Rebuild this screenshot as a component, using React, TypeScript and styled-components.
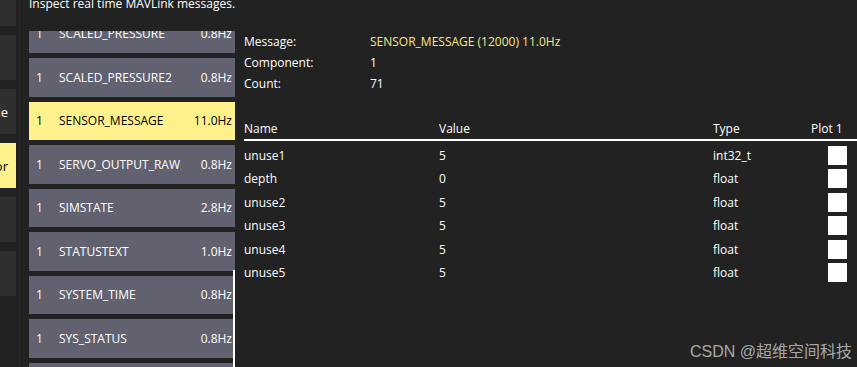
import React from "react";
import styled, { createGlobalStyle } from "styled-components";

const Global = createGlobalStyle`
  html, body { margin: 0; padding: 0; background: #222222; overflow: hidden; }
  body { font-family: "Open Sans", "Noto Sans", sans-serif; font-size: 12px; color: #ffffff; }
  #root { height: 100vh; }
`;

const Page = styled.div`
  position: relative;
  display: flex;
  height: 100vh;
  overflow: hidden;
  background: #222222;
`;

const SideStrip = styled.div`
  flex: none;
  width: 16px;
  display: flex;
  flex-direction: column;
  gap: 9px;
  margin-top: -19px;
  overflow: hidden;
`;

const SideButton = styled.div<{ $selected?: boolean }>`
  flex: none;
  height: 45px;
  display: flex;
  align-items: center;
  justify-content: flex-end;
  padding-right: 8px;
  overflow: hidden;
  white-space: nowrap;
  font-size: 13px;
  background: ${(p) => (p.$selected ? "#fff28c" : "#2f2f2f")};
  color: ${(p) => (p.$selected ? "#000000" : "#ffffff")};
`;

const Divider = styled.div`
  flex: none;
  width: 1px;
  margin-left: 3px;
  background: #2b2b2b;
`;

const Main = styled.div`
  flex: 1;
  min-width: 0;
  padding-left: 9px;
  display: flex;
  flex-direction: column;
`;

const Title = styled.div`
  margin-top: -5px;
  line-height: 18px;
  font-size: 12px;
  white-space: nowrap;
`;

const Content = styled.div`
  flex: 1;
  min-height: 0;
  margin-top: 18px;
  display: flex;
  gap: 9px;
`;

const ListViewport = styled.div`
  position: relative;
  flex: none;
  width: 206px;
  overflow: hidden;
`;

const ListInner = styled.div`
  margin-top: -16.5px;
  display: flex;
  flex-direction: column;
  gap: 5px;
`;

const MsgRow = styled.div<{ $selected?: boolean }>`
  flex: none;
  height: 38.5px;
  display: flex;
  align-items: center;
  padding: 0 3px 0 7px;
  background: ${(p) => (p.$selected ? "#fff28c" : "#62616f")};
  color: ${(p) => (p.$selected ? "#000000" : "#ffffff")};
  white-space: nowrap;
`;

const MsgComp = styled.span`
  width: 23px;
  flex: none;
`;

const MsgName = styled.span`
  flex: 1;
`;

const MsgHz = styled.span`
  flex: none;
  text-align: right;
`;

const ScrollIndicator = styled.div`
  position: absolute;
  right: 0;
  top: 239px;
  bottom: 0;
  width: 2px;
  background: #ffffff;
`;

const Detail = styled.div`
  flex: 1;
  min-width: 0;
  display: flex;
  flex-direction: column;
`;

const InfoGrid = styled.div`
  display: grid;
  grid-template-columns: 126px 1fr;
  grid-auto-rows: 21px;
  align-items: center;
  white-space: nowrap;
`;

const InfoValue = styled.span<{ $highlight?: boolean }>`
  color: ${(p) => (p.$highlight ? "#f2e88a" : "#ffffff")};
`;

const Table = styled.div`
  margin-top: 24px;
  display: flex;
  flex-direction: column;
`;

const cols = "195px 274px 98px 36px";

const HeaderRow = styled.div`
  display: grid;
  grid-template-columns: ${cols};
  height: 21px;
  align-items: center;
  padding-right: 10px;
  border-bottom: 2px solid #ffffff;
  white-space: nowrap;
`;

const Rows = styled.div`
  display: flex;
  flex-direction: column;
  gap: 4.4px;
  padding-top: 5px;
`;

const FieldRow = styled.div`
  display: grid;
  grid-template-columns: ${cols};
  height: 19px;
  align-items: center;
  padding-right: 10px;
  white-space: nowrap;
`;

const CheckBox = styled.div`
  justify-self: end;
  width: 19px;
  height: 19px;
  background: #ffffff;
`;

const Watermark = styled.div`
  position: absolute;
  right: 5px;
  bottom: 5px;
  font-family: "Liberation Sans", "Noto Sans CJK SC", sans-serif;
  font-size: 16px;
  color: rgba(255, 255, 255, 0.62);
  white-space: nowrap;
`;

const sideButtons = [
  { label: "" },
  { label: "" },
  { label: "MAVLink Console" },
  { label: "MAVLink Inspector", selected: true },
  { label: "" },
  { label: "" },
];

const messages = [
  { name: "SCALED_PRESSURE", hz: "0.8Hz" },
  { name: "SCALED_PRESSURE2", hz: "0.8Hz" },
  { name: "SENSOR_MESSAGE", hz: "11.0Hz", selected: true },
  { name: "SERVO_OUTPUT_RAW", hz: "0.8Hz" },
  { name: "SIMSTATE", hz: "2.8Hz" },
  { name: "STATUSTEXT", hz: "1.0Hz" },
  { name: "SYSTEM_TIME", hz: "0.8Hz" },
  { name: "SYS_STATUS", hz: "0.8Hz" },
  { name: "TIMESYNC", hz: "0.8Hz" },
];

const fields = [
  { name: "unuse1", value: "5", type: "int32_t" },
  { name: "depth", value: "0", type: "float" },
  { name: "unuse2", value: "5", type: "float" },
  { name: "unuse3", value: "5", type: "float" },
  { name: "unuse4", value: "5", type: "float" },
  { name: "unuse5", value: "5", type: "float" },
];

export default function App() {
  return (
    <>
      <Global />
      <Page>
        <SideStrip>
          {sideButtons.map((b, i) => (
            <SideButton key={i} $selected={b.selected}>
              {b.label}
            </SideButton>
          ))}
        </SideStrip>
        <Divider />
        <Main>
          <Title>Inspect real time MAVLink messages.</Title>
          <Content>
            <ListViewport>
              <ListInner>
                {messages.map((m) => (
                  <MsgRow key={m.name} $selected={m.selected}>
                    <MsgComp>1</MsgComp>
                    <MsgName>{m.name}</MsgName>
                    <MsgHz>{m.hz}</MsgHz>
                  </MsgRow>
                ))}
              </ListInner>
              <ScrollIndicator />
            </ListViewport>
            <Detail>
              <InfoGrid>
                <span>Message:</span>
                <InfoValue $highlight>SENSOR_MESSAGE (12000) 11.0Hz</InfoValue>
                <span>Component:</span>
                <InfoValue>1</InfoValue>
                <span>Count:</span>
                <InfoValue>71</InfoValue>
              </InfoGrid>
              <Table>
                <HeaderRow>
                  <span>Name</span>
                  <span>Value</span>
                  <span>Type</span>
                  <span>Plot 1</span>
                </HeaderRow>
                <Rows>
                  {fields.map((f) => (
                    <FieldRow key={f.name}>
                      <span>{f.name}</span>
                      <span>{f.value}</span>
                      <span>{f.type}</span>
                      <CheckBox />
                    </FieldRow>
                  ))}
                </Rows>
              </Table>
            </Detail>
          </Content>
        </Main>
        <Watermark>CSDN @超维空间科技</Watermark>
      </Page>
    </>
  );
}
